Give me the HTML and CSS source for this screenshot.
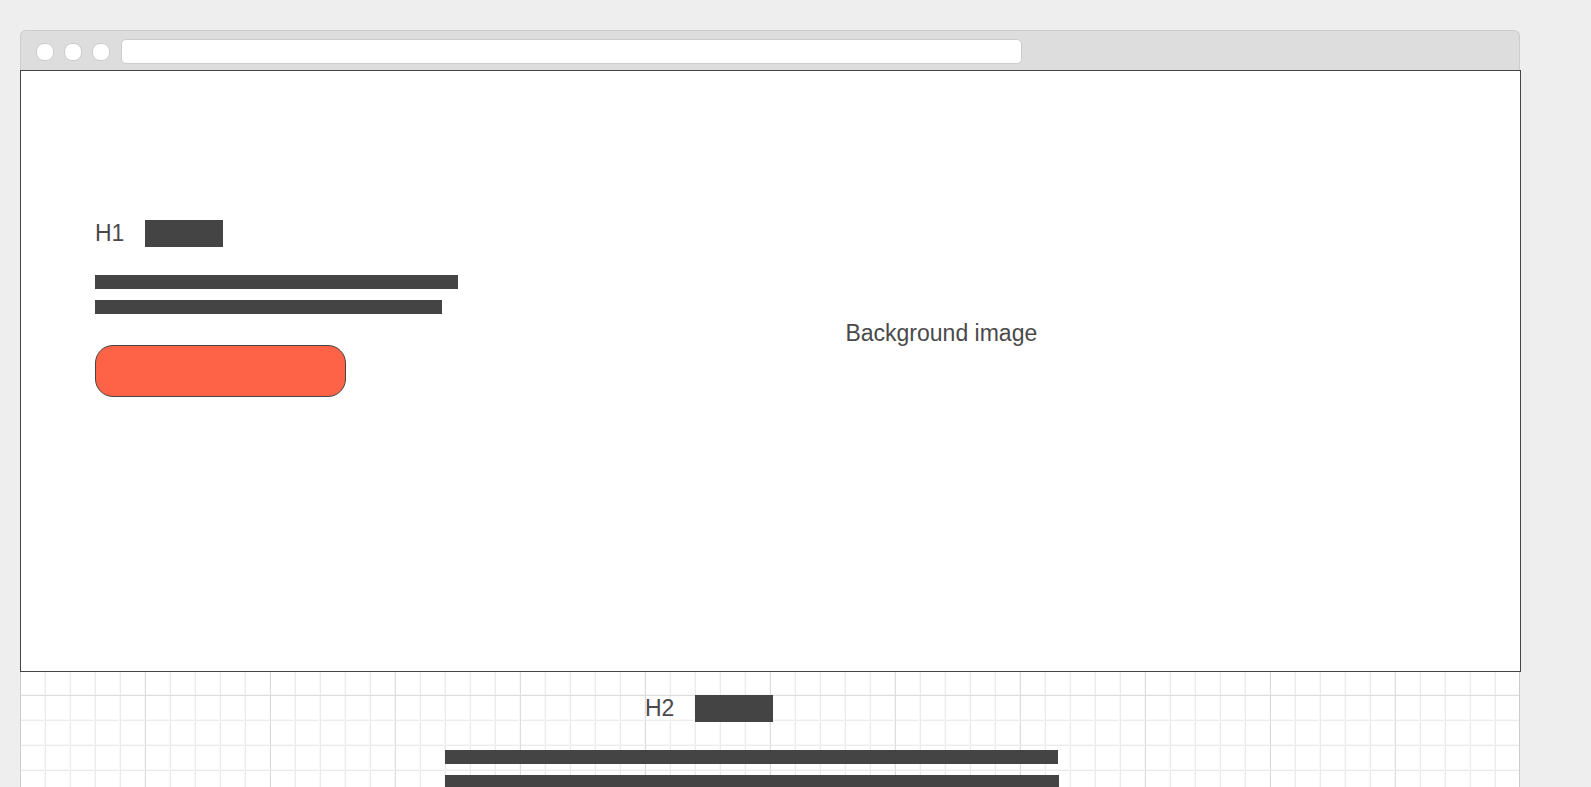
FILE: index.html
```html
<!DOCTYPE html>
<html lang="en">
<head>
<meta charset="utf-8">
<meta name="viewport" content="width=device-width, initial-scale=1">
<title>Wireframe</title>
<link rel="stylesheet" href="styles.css">
</head>
<body>
<header class="toolbar">
  <span class="dot"></span>
  <span class="dot"></span>
  <span class="dot"></span>
  <input class="address" type="text" aria-label="Address">
</header>
<main class="page">
  <section class="hero">
    <div class="intro">
      <div class="heading">
        <h1 class="label" id="intro-title">H1</h1>
        <span class="block"></span>
      </div>
      <div class="copy">
        <span class="line line-short"></span>
        <span class="line line-shorter"></span>
      </div>
      <button class="action" type="button" aria-labelledby="intro-title"></button>
    </div>
    <p class="label picture">Background image</p>
  </section>
  <section class="canvas">
    <div class="article">
      <div class="heading heading-inset">
        <h2 class="label">H2</h2>
        <span class="block"></span>
      </div>
      <div class="copy">
        <span class="line line-long"></span>
        <span class="line"></span>
      </div>
    </div>
  </section>
</main>
</body>
</html>
```
FILE: styles.css
```css
* {
  box-sizing: border-box;
}

body {
  display: flex;
  flex-direction: column;
  height: 100vh;
  margin: 0;
  padding: 30px 70px 0 20px;
  background: #eee;
  color: #4a4a4a;
  font-family: "Liberation Sans", Arial, sans-serif;
}

.toolbar {
  display: flex;
  flex: none;
  align-items: center;
  gap: 10px;
  height: 40px;
  margin-right: 1px;
  padding: 2px 15px 0;
  border: 1px solid #ccc;
  border-bottom: 0;
  border-radius: 6px 6px 0 0;
  background: #ddd;
}

.dot {
  flex: none;
  width: 18px;
  height: 18px;
  border: 1px solid #ccc;
  border-radius: 8px;
  background: #fff;
}

.address {
  width: 61.4%;
  height: 25px;
  margin: 0 0 0 1px;
  padding: 0 8px;
  border: 1px solid #ccc;
  border-radius: 5px;
  background: #fff;
  color: inherit;
  font: inherit;
  font-size: 14px;
}

.page {
  display: flex;
  flex: 1;
  flex-direction: column;
  min-height: 0;
}

.hero {
  display: grid;
  flex: none;
  grid-template-columns: 55% 1fr;
  min-height: 602px;
  border: 1px solid #444;
  background: #fff;
}

.intro {
  padding: 149px 20px 0 74px;
}

.heading {
  display: flex;
  align-items: center;
}

.heading-inset {
  padding-left: 200px;
}

.label {
  margin: 0;
  font-size: 23px;
  font-weight: 400;
  line-height: 27px;
}

.heading .label {
  width: 50px;
}

.block {
  width: 78px;
  height: 27px;
  background: #444;
}

.copy {
  display: flex;
  flex-direction: column;
  gap: 11px;
  margin-top: 28px;
}

.line {
  flex: none;
  height: 14px;
  background: #444;
}

.line-short {
  width: 363px;
}

.line-shorter {
  width: 347px;
}

.line-long {
  width: 613px;
}

.action {
  display: block;
  width: 251px;
  height: 52px;
  margin-top: 31px;
  border: 1px solid #444;
  border-radius: 18px;
  background: #ff6347;
}

.picture {
  padding-top: 249px;
}

.canvas {
  flex: 1;
  min-height: 0;
  margin-right: 1px;
  padding: 23px 0 0 424px;
  overflow: hidden;
  border: solid #ccc;
  border-width: 0 1px;
  background-color: #fff;
  background-image:
    linear-gradient(to right, transparent 124px, #ddd 124px),
    linear-gradient(to bottom, transparent 124px, #ddd 124px),
    linear-gradient(to right, transparent 23px, #f8f8f8 23px, #f8f8f8 24px, #ebebeb 24px),
    linear-gradient(to bottom, transparent 23px, #f8f8f8 23px, #f8f8f8 24px, #ebebeb 24px);
  background-position: 0 0, 0 -101px, 0 0, 0 -1px;
  background-size: 125px 125px, 125px 125px, 25px 25px, 25px 25px;
}

.article {
  width: 614px;
}
```
